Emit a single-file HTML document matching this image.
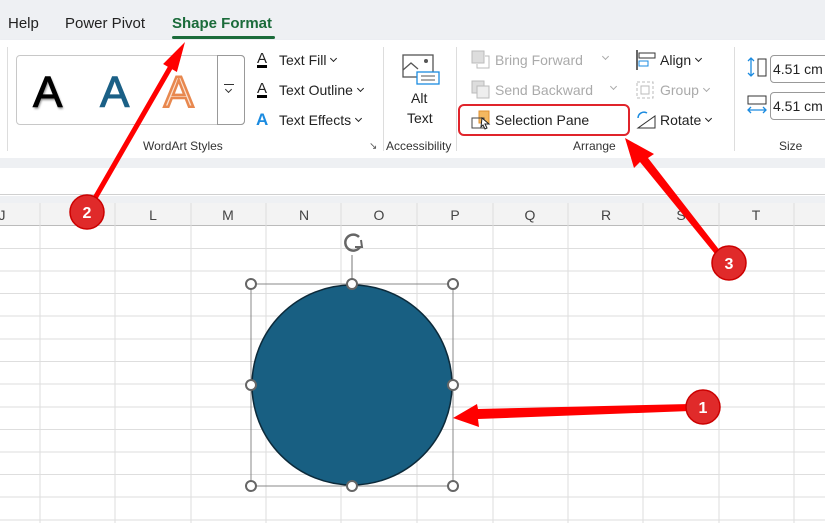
<!DOCTYPE html>
<html><head><meta charset="utf-8"><style>
*{margin:0;padding:0;box-sizing:border-box}
body{width:825px;height:523px;overflow:hidden;background:#fff;font-family:"Liberation Sans",sans-serif;position:relative;color:#222}
.a{position:absolute;white-space:nowrap}
.c{display:inline-block;width:5px;height:5px;border-right:1.3px solid currentColor;border-bottom:1.3px solid currentColor;transform:rotate(45deg);margin-left:5px;vertical-align:4px}
</style></head><body>
<!-- tab bar -->
<div class="a" style="left:0;top:0;width:825px;height:40px;background:#eef0f3"></div>
<div class="a" style="left:8px;top:15px;font-size:15px">Help</div>
<div class="a" style="left:65px;top:15px;font-size:15px">Power Pivot</div>
<div class="a" style="left:172px;top:15px;font-size:15px;color:#1a6b3a;font-weight:bold">Shape Format</div>
<div class="a" style="left:172px;top:36px;width:103px;height:3px;background:#1a6b3a;border-radius:2px"></div>
<!-- ribbon -->
<div class="a" style="left:0;top:40px;width:825px;height:118px;background:#fff;box-shadow:0 2px 3px rgba(0,0,0,.15)"></div>
<div class="a" style="left:0;top:158px;width:825px;height:10px;background:#eef0f3"></div>
<div class="a" style="left:0;top:168px;width:825px;height:27px;background:#fff;border-bottom:1px solid #d0d0d0"></div>
<div class="a" style="left:0;top:196px;width:825px;height:7px;background:#eef0f3"></div>
<!-- wordart gallery -->
<div class="a" style="left:16px;top:55px;width:229px;height:70px;border:1px solid #c8c8c8;border-radius:4px"></div>
<div class="a" style="left:217px;top:55px;width:28px;height:70px;border:1px solid #999;border-radius:0 4px 4px 0"></div>
<div class="a" style="left:224px;top:84px;width:10px;height:1px;background:#333"></div>
<div class="a" style="left:221px;top:83px;color:#333"><span class="c"></span></div>
<div class="a" style="left:33px;top:68px;font-size:44px;color:#000;text-shadow:1px 2px 2px #888;-webkit-text-stroke:1px #000">A</div>
<div class="a" style="left:100px;top:68px;font-size:44px;color:#1b6086;-webkit-text-stroke:1px #1b6086">A</div>
<div class="a" style="left:164px;top:68px;font-size:44px;color:#fbe2d2;-webkit-text-stroke:2.5px #e8884f">A</div>
<div class="a" style="left:257px;top:50px;font-size:15px;text-decoration:underline 3px #000">A</div>
<div class="a" style="left:279px;top:52px;font-size:14px">Text Fill<span class="c"></span></div>
<div class="a" style="left:257px;top:80px;font-size:15px;text-decoration:underline 3px #000">A</div>
<div class="a" style="left:279px;top:82px;font-size:14px">Text Outline<span class="c"></span></div>
<div class="a" style="left:256px;top:110px;font-size:17px;color:#1b8be0;font-weight:bold">A</div>
<div class="a" style="left:279px;top:112px;font-size:14px">Text Effects<span class="c"></span></div>
<div class="a" style="left:143px;top:139px;font-size:12px;color:#333">WordArt Styles</div>
<div class="a" style="left:369px;top:141px;font-size:10px;color:#555">↘</div>
<div class="a" style="left:7px;top:47px;width:1px;height:104px;background:#ddd"></div>
<div class="a" style="left:383px;top:47px;width:1px;height:104px;background:#ddd"></div>
<div class="a" style="left:456px;top:47px;width:1px;height:104px;background:#ddd"></div>
<div class="a" style="left:734px;top:47px;width:1px;height:104px;background:#ddd"></div>
<!-- alt text -->
<svg class="a" style="left:402px;top:54px" width="38" height="32"><rect x="1" y="1" width="30" height="22" fill="#fff" stroke="#555" stroke-width="1.3"/><path d="M1 16 L9 9 L16 15" fill="none" stroke="#555" stroke-width="1.3"/><circle cx="24" cy="7" r="2" fill="#555"/><rect x="15" y="18" width="22" height="12" fill="#fff" stroke="#1b8be0" stroke-width="1.3"/><path d="M19 22h14M19 26h14" stroke="#555"/></svg>
<div class="a" style="left:411px;top:90px;font-size:14px">Alt</div>
<div class="a" style="left:407px;top:110px;font-size:14px">Text</div>
<div class="a" style="left:386px;top:139px;font-size:12px;color:#333">Accessibility</div>
<!-- arrange -->
<svg class="a" style="left:471px;top:50px" width="20" height="20"><rect x="1" y="1" width="12" height="12" fill="#ddd" stroke="#bbb"/><path d="M14 6h4v12H6v-4" fill="none" stroke="#bbb"/></svg>
<div class="a" style="left:495px;top:52px;font-size:14px;color:#aaa">Bring Forward</div>
<div class="a" style="left:598px;top:52px;font-size:12px;color:#aaa"><span class="c"></span></div>
<svg class="a" style="left:471px;top:80px" width="20" height="20"><rect x="1" y="1" width="12" height="12" fill="#ddd" stroke="#bbb"/><rect x="6" y="6" width="12" height="12" fill="#eee" stroke="#bbb"/></svg>
<div class="a" style="left:495px;top:82px;font-size:14px;color:#aaa">Send Backward</div>
<div class="a" style="left:606px;top:82px;font-size:12px;color:#aaa"><span class="c"></span></div>
<svg class="a" style="left:471px;top:110px" width="22" height="20"><rect x="8" y="1" width="10" height="12" fill="#f4b860" stroke="#e09030"/><rect x="1" y="8" width="12" height="10" fill="none" stroke="#444"/><path d="M11 8l7 6h-4l2 4-2 1-2-4-2 2z" fill="#fff" stroke="#222"/></svg>
<div class="a" style="left:495px;top:112px;font-size:14px">Selection Pane</div>
<div class="a" style="left:458px;top:104px;width:172px;height:32px;border:2px solid #e0242b;border-radius:6px"></div>
<svg class="a" style="left:635px;top:49px" width="22" height="22"><path d="M2 1v20" stroke="#333" stroke-width="1.5"/><rect x="4" y="4" width="16" height="5" fill="none" stroke="#333"/><rect x="4" y="12" width="9" height="5" fill="none" stroke="#1b8be0"/></svg>
<div class="a" style="left:660px;top:52px;font-size:14px">Align<span class="c"></span></div>
<svg class="a" style="left:635px;top:80px" width="20" height="20"><rect x="2" y="2" width="16" height="16" fill="none" stroke="#bbb" stroke-dasharray="3 2"/><rect x="6" y="6" width="8" height="8" fill="none" stroke="#bbb"/></svg>
<div class="a" style="left:660px;top:82px;font-size:14px;color:#aaa">Group<span class="c"></span></div>
<svg class="a" style="left:635px;top:110px" width="22" height="20"><path d="M3 18h17V6z" fill="none" stroke="#333"/><path d="M3 8a6 6 0 0 1 9-5" fill="none" stroke="#1b8be0" stroke-width="1.5"/></svg>
<div class="a" style="left:660px;top:112px;font-size:14px">Rotate<span class="c"></span></div>
<div class="a" style="left:573px;top:139px;font-size:12px;color:#333">Arrange</div>
<!-- size -->
<svg class="a" style="left:746px;top:56px" width="24" height="24"><path d="M5 2v18M2 5l3-3 3 3M2 17l3 3 3-3" fill="none" stroke="#1b8be0" stroke-width="1.3"/><rect x="12" y="3" width="8" height="17" fill="none" stroke="#333"/></svg>
<div class="a" style="left:770px;top:55px;width:60px;height:28px;border:1px solid #999;border-radius:4px;font-size:14px;padding:5px 2px">4.51 cm</div>
<svg class="a" style="left:746px;top:94px" width="24" height="24"><rect x="2" y="2" width="18" height="8" fill="none" stroke="#333"/><path d="M2 16h18M5 13l-3 3 3 3M17 13l3 3-3 3" fill="none" stroke="#1b8be0" stroke-width="1.3"/></svg>
<div class="a" style="left:770px;top:92px;width:60px;height:28px;border:1px solid #999;border-radius:4px;font-size:14px;padding:5px 2px">4.51 cm</div>
<div class="a" style="left:779px;top:139px;font-size:12px;color:#333">Size</div>
<!-- grid -->
<svg class="a" style="left:0;top:203px" width="825" height="320">
<rect width="825" height="23" fill="#f3f3f3"/><line x1="0" y1="22.5" x2="825" y2="22.5" stroke="#bbb"/>
<g stroke="#dedede"><path d="M40 0V320M115 0V320M191 0V320M266 0V320M341 0V320M417 0V320M493 0V320M568 0V320M643 0V320M719 0V320M794 0V320"/>
<path d="M0 45.5H825M0 68H825M0 90.5H825M0 113H825M0 136H825M0 158.5H825M0 181H825M0 204H825M0 226.5H825M0 249H825M0 271.5H825M0 294H825M0 317H825"/></g>
<g font-family="Liberation Sans" font-size="14" fill="#444" text-anchor="middle">
<text x="2" y="17">J</text><text x="78" y="17">K</text><text x="153" y="17">L</text><text x="228" y="17">M</text><text x="304" y="17">N</text><text x="379" y="17">O</text><text x="455" y="17">P</text><text x="530" y="17">Q</text><text x="606" y="17">R</text><text x="681" y="17">S</text><text x="756" y="17">T</text></g>
</svg>
<!-- shape -->
<svg class="a" style="left:0;top:0" width="825" height="523">
<line x1="352" y1="255" x2="352" y2="284" stroke="#777"/>
<path d="M359 237a8 8 0 1 0 1 10" fill="none" stroke="#666" stroke-width="2.5"/><path d="M355 247l7 0-1-7" fill="none" stroke="#666" stroke-width="2"/>
<rect x="251" y="284" width="202" height="202" fill="none" stroke="#888"/>
<circle cx="352" cy="385" r="100" fill="#185f82" stroke="#0c2a3a" stroke-width="1.5"/>
<g fill="#fff" stroke="#666" stroke-width="2"><circle cx="251" cy="284" r="5"/><circle cx="352" cy="284" r="5"/><circle cx="453" cy="284" r="5"/><circle cx="251" cy="385" r="5"/><circle cx="453" cy="385" r="5"/><circle cx="251" cy="486" r="5"/><circle cx="352" cy="486" r="5"/><circle cx="453" cy="486" r="5"/></g>
<!-- arrows -->
<g fill="#f00">
<path d="M690 404 L478 409 L477 404 L453 418 L479 427 L478 419 L690 411z"/>
<path d="M84.8 210.75 L167.8 66.75 L163.1 64 L185 42 L176.9 72 L172.2 69.25 L89.2 213.25z"/>
<path d="M724 256 L648 158 L654 154 L625 138 L634 168 L640 162 L720 260z"/>
</g>
<g font-family="Liberation Sans" font-size="16" font-weight="bold" fill="#fff" text-anchor="middle">
<circle cx="703" cy="407" r="17" fill="#e02a2a" stroke="#c00" stroke-width="1.5"/><text x="703" y="413">1</text>
<circle cx="87" cy="212" r="17" fill="#e02a2a" stroke="#c00" stroke-width="1.5"/><text x="87" y="218">2</text>
<circle cx="729" cy="263" r="17" fill="#e02a2a" stroke="#c00" stroke-width="1.5"/><text x="729" y="269">3</text>
</g>
</svg>
</body></html>
